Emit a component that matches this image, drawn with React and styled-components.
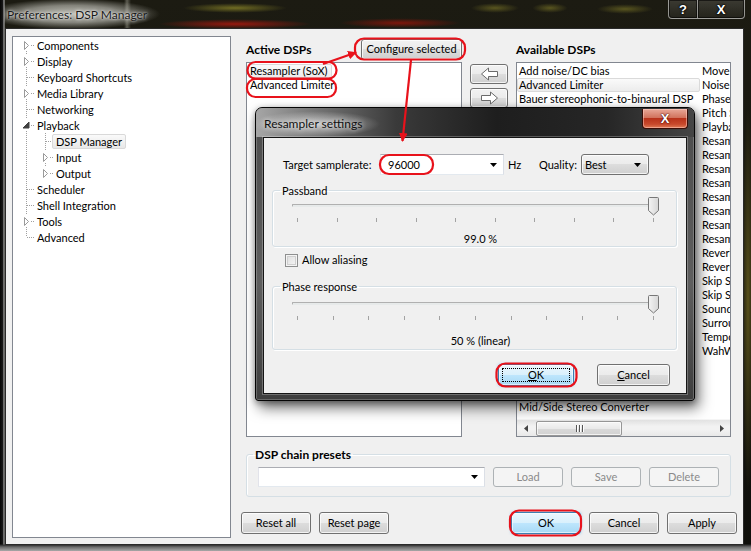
import React from "react";
import styled, { createGlobalStyle, css } from "styled-components";

const UI_FONT = `Lato, "Liberation Sans", Arial, sans-serif`;

const GlobalStyle = createGlobalStyle`
  *, *::before, *::after { box-sizing: border-box; }
  html, body { margin: 0; padding: 0; width: 751px; height: 551px; overflow: hidden; background: #151510; }
  #root { width: 751px; height: 551px; }
`;

/* ---------- outer window ---------- */
const Window = styled.div`
  position: relative;
  width: 751px;
  height: 551px;
  display: flex;
  flex-direction: column;
  font-family: ${UI_FONT};
  font-size: 11px;
  color: #000;
  overflow: hidden;
  background:
    linear-gradient(to bottom, transparent 544px, #2e2e2e 545px, #6a6a6a 547px, #a8a8a8 551px),
    linear-gradient(to right, #050505 0px, #1a1a1a 3px, #bdbdbd 4px, transparent 5px),
    radial-gradient(ellipse 110px 19px at 72px 14px, rgba(200,200,192,0.95), rgba(200,200,192,0.6) 45%, rgba(200,200,192,0) 80%),
    linear-gradient(to right, transparent 124px, rgba(215,215,200,0.35) 127px, transparent 131px),
    radial-gradient(ellipse 95px 6px at 235px 24px, rgba(165,25,15,0.9), transparent 80%),
    radial-gradient(ellipse 75px 6px at 400px 23px, rgba(150,20,10,0.8), transparent 80%),
    radial-gradient(ellipse 65px 6px at 235px 8px, rgba(140,135,40,0.75), transparent 80%),
    radial-gradient(ellipse 30px 6px at 495px 8px, rgba(130,125,40,0.6), transparent 80%),
    radial-gradient(ellipse 22px 6px at 550px 8px, rgba(130,125,40,0.6), transparent 80%),
    radial-gradient(ellipse 35px 6px at 625px 9px, rgba(130,125,40,0.6), transparent 80%),
    radial-gradient(ellipse 8px 240px at 748px 300px, rgba(110,100,30,0.75), transparent 80%),
    linear-gradient(to bottom, #1c1b12, #0f0f0b);
`;

const TitleBar = styled.div`
  height: 28px;
  flex: none;
  display: flex;
  align-items: flex-start;
  justify-content: space-between;
`;

const TitleText = styled.div`
  padding: 7px 0 0 7px;
  font-size: 12px;
  line-height: 15px;
  color: #1a1a1a;
  text-shadow: 0 0 4px rgba(255, 255, 255, 0.9), 0 0 2px rgba(255, 255, 255, 0.7);
`;

const CaptionButtons = styled.div`
  display: flex;
  margin-right: 6px;
`;

const CaptionButton = styled.div`
  width: ${(p) => p.$w}px;
  height: 19px;
  display: flex;
  align-items: center;
  justify-content: center;
  border: 1px solid rgba(255, 255, 255, 0.5);
  border-top: none;
  background: linear-gradient(rgba(255, 255, 255, 0.14), rgba(255, 255, 255, 0.04));
  box-shadow: inset 0 0 0 1px rgba(0, 0, 0, 0.55);
  color: #fff;
  font: bold 13px "Liberation Sans", Arial, sans-serif;
  text-shadow: 0 0 2px #000, 0 0 2px #000, 0 0 1px #000;
  &:first-child { border-radius: 0 0 0 4px; }
  &:last-child { border-radius: 0 0 4px 0; border-left: none; }
`;

const Client = styled.div`
  margin: 0 7px 0 5px;
  height: 517px;
  flex: none;
  background: #f0f0f0;
  border: 1px solid #2a2a2a;
  display: flex;
  gap: 10px;
  padding: 7px 0 0 6px;
`;

/* ---------- tree ---------- */
const Tree = styled.div`
  width: 219px;
  height: 502px;
  background: #fff;
  border: 1px solid #828790;
  padding-top: 0;
`;

const TreeRow = styled.div`
  height: 16px;
  display: flex;
  align-items: center;
  padding-left: 6px;
`;

const TreeLabel = styled.span`
  margin-left: -4px;
  padding: 0 3px;
  height: 15px;
  line-height: 13px;
  white-space: nowrap;
  border: 1px solid transparent;
  border-radius: 2px;
  ${(p) =>
    p.$selected &&
    css`
      background: linear-gradient(#fafafa, #e8e8e8);
      border-color: #d9d9d9;
    `}
`;

const Dots = { stroke: "#a0a0a0", strokeDasharray: "1 1" };

function Rail() {
  return (
    <svg width="19" height="16" style={{ flex: "none" }}>
      <line x1="7.5" y1="0" x2="7.5" y2="16" {...Dots} />
    </svg>
  );
}

function Connector({ first, last, exp }) {
  return (
    <svg width="18" height="16" style={{ flex: "none" }}>
      <line x1="7.5" y1={first ? 8 : 0} x2="7.5" y2={last ? 8 : 16} {...Dots} />
      <line x1="8" y1="8.5" x2="16" y2="8.5" {...Dots} />
      {exp && <rect x="3" y="2" width="8" height="12" fill="#fff" />}
      {exp === "closed" && (
        <path d="M5.5 4.5 L9.5 8.5 L5.5 12.5 Z" fill="#fff" stroke="#9a9a9a" />
      )}
      {exp === "open" && <path d="M10 5 L10 11 L4 11 Z" fill="#404040" stroke="#404040" strokeLinejoin="round" />}
    </svg>
  );
}

const treeItems = [
  { label: "Components", level: 0, exp: "closed", first: true },
  { label: "Display", level: 0, exp: "closed" },
  { label: "Keyboard Shortcuts", level: 0 },
  { label: "Media Library", level: 0, exp: "closed" },
  { label: "Networking", level: 0 },
  { label: "Playback", level: 0, exp: "open" },
  { label: "DSP Manager", level: 1, selected: true },
  { label: "Input", level: 1, exp: "closed" },
  { label: "Output", level: 1, exp: "closed", last: true },
  { label: "Scheduler", level: 0 },
  { label: "Shell Integration", level: 0 },
  { label: "Tools", level: 0, exp: "closed" },
  { label: "Advanced", level: 0, last: true },
];

/* ---------- right pane ---------- */
const RightPane = styled.div`
  width: 496px;
  display: flex;
  flex-direction: column;
`;

const DspGrid = styled.div`
  display: grid;
  grid-template-columns: 216px 38px 215px;
  grid-template-rows: 26px 375px;
  column-gap: 8px;
  padding: 0 6px 0 5px;
`;

const ColumnHead = styled.div`
  display: flex;
  align-items: center;
  justify-content: space-between;
`;

const HeadLabel = styled.span`
  font-weight: bold;
  font-size: 12px;
  line-height: 15px;
`;

const buttonBase = css`
  font-family: ${UI_FONT};
  font-size: 11px;
  color: #000;
  border: 1px solid #707070;
  border-radius: 3px;
  background: linear-gradient(#f2f2f2 0%, #ebebeb 49%, #dddddd 50%, #cfcfcf 100%);
  box-shadow: inset 0 0 0 1px rgba(255, 255, 255, 0.75);
  display: flex;
  align-items: center;
  justify-content: center;
  padding: 0;
  line-height: 14px;
  white-space: nowrap;
`;

const Button = styled.button`
  ${buttonBase}
  width: ${(p) => p.$w || 70}px;
  height: ${(p) => p.$h || 22}px;
  ${(p) =>
    p.$default &&
    css`
      border-color: #3c7fb1;
      background: linear-gradient(#eaf6fd 0%, #d9f0fc 49%, #bee6fd 50%, #a7d9f5 100%);
      box-shadow: inset 0 0 0 1px rgba(255, 255, 255, 0.6), 0 0 3px rgba(80, 170, 240, 0.6);
    `}
  ${(p) =>
    p.$disabled &&
    css`
      color: #8a8a8a;
      border-color: #adb2b5;
      background: #f4f4f4;
      box-shadow: none;
    `}
`;

const FocusRect = styled.span`
  display: flex;
  align-items: center;
  justify-content: center;
  width: calc(100% - 6px);
  height: calc(100% - 6px);
  border: 1px dotted #000;
`;

const Underline = styled.span`
  text-decoration: underline;
`;

const ListBox = styled.div`
  background: #fff;
  border: 1px solid #828790;
  display: flex;
  flex-direction: column;
  overflow: hidden;
`;

const ListRows = styled.div`
  flex: 1;
  padding: 1px 0 0 ${(p) => (p.$columns ? 0 : 1)}px;
  overflow: hidden;
  ${(p) =>
    p.$columns &&
    css`
      display: grid;
      grid-auto-flow: column;
      grid-template-rows: repeat(25, 14px);
      grid-auto-columns: 183px;
      align-content: start;
    `}
`;

const ListItem = styled.div`
  height: 14px;
  line-height: 12px;
  padding: 0 ${(p) => (p.$fit ? 3 : 1)}px 0 1px;
  white-space: nowrap;
  overflow: hidden;
  border: 1px solid transparent;
  border-radius: 2px;
  width: ${(p) => (p.$fit ? "max-content" : "auto")};
  ${(p) =>
    p.$selected &&
    css`
      background: linear-gradient(#fafafa, #ececec);
      border-color: #dadada;
    `}
`;

const ArrowColumn = styled.div`
  display: flex;
  flex-direction: column;
  gap: 4px;
  padding-top: 2px;
`;

const HScroll = styled.div`
  height: 17px;
  flex: none;
  display: flex;
  align-items: center;
  background: linear-gradient(#e3e3e3, #f2f2f2 40%, #f2f2f2 60%, #e8e8e8);
  border-top: 1px solid #f5f5f5;
`;

const ScrollArrow = styled.div`
  width: 17px;
  height: 17px;
  display: flex;
  align-items: center;
  justify-content: center;
`;

const ScrollTrack = styled.div`
  flex: 1;
  height: 17px;
  display: flex;
  align-items: center;
  padding-left: 2px;
`;

const ScrollThumb = styled.div`
  width: 86px;
  height: 15px;
  border: 1px solid #979797;
  border-radius: 2px;
  background: linear-gradient(#f6f6f6, #e9e9e9 50%, #d9d9d9 51%, #d2d2d2);
  box-shadow: inset 0 0 0 1px rgba(255, 255, 255, 0.7);
  display: flex;
  align-items: center;
  justify-content: center;
  gap: 2px;
`;

const Grip = styled.span`
  width: 1px;
  height: 7px;
  background: #555;
  box-shadow: 1px 0 0 #fff;
`;

const GroupBox = styled.fieldset`
  margin: 10px 6px 0 5px;
  padding: 5px 11px 9px 11px;
  border: 1px solid #d5dfe5;
  border-radius: 3px;
  box-shadow: inset 1px 1px 0 #fff;
  min-inline-size: 0;
`;

const GroupLegend = styled.legend`
  margin-left: ${(p) => p.$ml}px;
  padding: 0 2px;
  font-weight: ${(p) => (p.$bold ? "bold" : "normal")};
  font-size: ${(p) => (p.$bold ? 12 : 11)}px;
  line-height: 15px;
`;

const PresetRow = styled.div`
  display: flex;
  gap: 8px;
  height: 20px;
`;

const ComboEdit = styled.div`
  width: ${(p) => p.$w}px;
  height: ${(p) => p.$h || 20}px;
  background: #fff;
  border: 1px solid #abadb3;
  border-right-color: #dbdfe6;
  border-bottom-color: #e3e9ef;
  border-left-color: #e2e3ea;
  display: flex;
  align-items: center;
  justify-content: space-between;
  padding: 0 5px 0 7px;
  line-height: 14px;
`;

const ComboButton = styled.div`
  ${buttonBase}
  width: ${(p) => p.$w}px;
  height: 21px;
  justify-content: space-between;
  padding: 0 6px 0 3px;
`;

const BottomRow = styled.div`
  margin-top: 15px;
  display: flex;
  justify-content: space-between;
`;

const ButtonGroup = styled.div`
  display: flex;
  gap: 8px;
`;

function DropArrow() {
  return (
    <svg width="8" height="4" style={{ flex: "none" }}>
      <path d="M0 0 H7 L3.5 4 Z" fill="#000" />
    </svg>
  );
}

function MoveArrow({ dir }) {
  const d =
    dir === "left"
      ? "M1.5 7 L8.5 1 L8.5 4.5 L17.5 4.5 L17.5 9.5 L8.5 9.5 L8.5 13 Z"
      : "M17.5 7 L10.5 1 L10.5 4.5 L1.5 4.5 L1.5 9.5 L10.5 9.5 L10.5 13 Z";
  return (
    <svg width="19" height="14">
      <path d={d} fill="#fff" stroke="#6a6a6a" strokeLinejoin="round" />
    </svg>
  );
}

const col1 = [
  "Add noise/DC bias",
  "Advanced Limiter",
  "Bauer stereophonic-to-binaural DSP",
  "Channel mixer",
  "Convert 5.1 to stereo",
  "Convolver",
  "Crossfader",
  "Downmix channels to mono",
  "Downmix channels to stereo",
  "Dynamic Range Compressor",
  "Echo",
  "Equalizer",
  "Hard -6dB limiter",
  "Headphone",
  "Limiter",
  "Bass Boost",
  "Matrix Mixer",
  "Center Cut",
  "Ambience",
  "Channel Delay",
  "Chorus",
  "Dolby Headphone",
  "Graphic Equalizer",
  "Channel Swap",
  "Mid/Side Stereo Converter",
];

const col2 = [
  "Move stereo to center channel",
  "Noise sharpening",
  "Phase Inverter",
  "Pitch Shift",
  "Playback Rate Shift",
  "Resampler (dBpoweramp/SSRC)",
  "Resampler (libsamplerate)",
  "Resampler (PPHS)",
  "Resampler (SoX)",
  "Resampler (SRC)",
  "Resampler (Secret Rabbit Code)",
  "Resampler (MediaFoundation)",
  "Resampler (speex)",
  "Reverb",
  "Reverse stereo channels",
  "Skip Silence",
  "Skip Silence (live)",
  "Sound Touch",
  "Surround",
  "Tempo Shift",
  "WahWah",
];

/* ---------- dialog ---------- */
const Dialog = styled.div`
  position: absolute;
  left: 255px;
  top: 107px;
  width: 440px;
  height: 294px;
  display: flex;
  flex-direction: column;
  padding: 0 7px 6px 7px;
  border: 1px solid #050505;
  border-radius: 7px 7px 3px 3px;
  background: linear-gradient(to bottom, #4c4c4c, #5e5e5e 60%, #3e3e3e);
  box-shadow: inset 0 0 0 1px rgba(255, 255, 255, 0.22), 4px 7px 14px rgba(0, 0, 0, 0.55),
    0 2px 6px rgba(0, 0, 0, 0.35);
  z-index: 2;
`;

const DialogTitle = styled.div`
  height: 29px;
  flex: none;
  margin: 0 -7px;
  padding: 0 6px 0 7px;
  display: flex;
  justify-content: space-between;
  align-items: flex-start;
  border-radius: 6px 6px 0 0;
  background:
    radial-gradient(ellipse 80px 16px at 60px 16px, rgba(230, 230, 230, 0.75), rgba(230, 230, 230, 0) 80%),
    linear-gradient(to right, #a6a6a6 0%, #7a7a7a 12%, #3a3a3a 32%, #1e1e1e 55%, #262626 80%, #454545 100%);
`;

const DialogCaption = styled.span`
  padding: 8px 0 0 1px;
  font-size: 12px;
  line-height: 15px;
  color: #111;
  text-shadow: 0 0 5px rgba(255, 255, 255, 0.9);
`;

const CloseButton = styled.div`
  width: 46px;
  height: 20px;
  margin-top: 1px;
  display: flex;
  align-items: center;
  justify-content: center;
  border: 1px solid #3a0d06;
  border-top: none;
  border-radius: 0 0 4px 4px;
  background: linear-gradient(#e8a898 0%, #d2735d 45%, #b8321a 50%, #c8492c 80%, #e07a55 100%);
  box-shadow: inset 0 0 0 1px rgba(255, 210, 200, 0.5);
  color: #fff;
  font: bold 13px "Liberation Sans", Arial, sans-serif;
  text-shadow: 0 0 2px #400, 0 0 1px #400;
`;

const DialogClient = styled.div`
  flex: 1;
  background: #f0f0f0;
  border: 1px solid #151515;
  box-shadow: 0 0 0 1px rgba(255, 255, 255, 0.25);
  display: flex;
  flex-direction: column;
`;

const SettingsRow = styled.div`
  margin-top: 16px;
  height: 21px;
  display: flex;
  align-items: center;
  padding-left: 19px;
`;

const FieldLabel = styled.span`
  width: ${(p) => p.$w}px;
  margin-left: ${(p) => p.$ml || 0}px;
  flex: none;
  line-height: 15px;
  white-space: nowrap;
`;

const DialogGroup = styled.fieldset`
  margin: ${(p) => p.$mt}px 9px 0 8px;
  padding: 0 0 ${(p) => p.$pb}px 0;
  border: 1px solid #d5dfe5;
  border-radius: 3px;
  box-shadow: inset 1px 1px 0 #fff, 1px 1px 0 #fff;
  min-inline-size: 0;
`;

const SliderTrack = styled.div`
  position: relative;
  height: 19px;
  margin: ${(p) => p.$mt}px 21px 0 19px;
  &::before {
    content: "";
    position: absolute;
    left: 0;
    right: 0;
    top: 7px;
    height: 3px;
    border: 1px solid #b0b0b0;
    border-bottom-color: #e7eaea;
    border-right-color: #e7eaea;
    background: #e7eaea;
    border-radius: 1px;
  }
`;

const SliderThumb = styled.svg`
  position: absolute;
  top: 0;
`;

const TickRow = styled.div`
  margin: 2px 22px 0 24px;
  height: 4px;
  display: flex;
  justify-content: space-between;
`;

const Tick = styled.span`
  width: 1px;
  height: 4px;
  background: #a3a3a3;
`;

const SliderValue = styled.div`
  margin-top: ${(p) => p.$mt}px;
  line-height: 14px;
  text-align: center;
  padding-left: 12px;
`;

const CheckRow = styled.label`
  margin-top: 6px;
  height: 14px;
  display: flex;
  align-items: center;
  gap: 4px;
  padding-left: 21px;
  line-height: 14px;
`;

const CheckBox = styled.span`
  width: 13px;
  height: 13px;
  border: 1px solid #8e8f8f;
  background: linear-gradient(135deg, #dcdcdc, #f7f7f7);
  box-shadow: inset 0 0 0 1px #f4f4f4, inset 0 0 0 2px #cfcfcf;
`;

const DialogButtons = styled.div`
  margin-top: 14px;
  display: flex;
  justify-content: flex-end;
  gap: 23px;
  padding-right: 16px;
`;

function Slider({ ticks, thumbLeft, mt }) {
  return (
    <>
      <SliderTrack $mt={mt}>
        <SliderThumb width="11" height="19" style={{ left: thumbLeft }}>
          <defs>
            <linearGradient id="thumbg" x1="0" y1="0" x2="1" y2="0">
              <stop offset="0" stopColor="#f4f4f4" />
              <stop offset="1" stopColor="#d6d6d6" />
            </linearGradient>
          </defs>
          <path d="M1.5 0.5 H9.5 Q10.5 0.5 10.5 1.5 V13.5 L5.5 18 L0.5 13.5 V1.5 Q0.5 0.5 1.5 0.5 Z" fill="url(#thumbg)" stroke="#777" />
        </SliderThumb>
      </SliderTrack>
      <TickRow>
        {Array.from({ length: ticks }).map((_, i) => (
          <Tick key={i} />
        ))}
      </TickRow>
    </>
  );
}

/* ---------- annotation overlay ---------- */
const Annotations = styled.svg`
  position: absolute;
  left: 0;
  top: 0;
  pointer-events: none;
  z-index: 3;
`;

const RED = "#e8121b";

export default function App() {
  return (
    <>
      <GlobalStyle />
      <Window>
        <TitleBar>
          <TitleText>Preferences: DSP Manager</TitleText>
          <CaptionButtons>
            <CaptionButton $w={30}>?</CaptionButton>
            <CaptionButton $w={47}>X</CaptionButton>
          </CaptionButtons>
        </TitleBar>

        <Client>
          <Tree>
            {treeItems.map((it) => (
              <TreeRow key={it.label}>
                {it.level === 1 && <Rail />}
                <Connector first={it.first} last={it.last} exp={it.exp} />
                <TreeLabel $selected={it.selected}>{it.label}</TreeLabel>
              </TreeRow>
            ))}
          </Tree>

          <RightPane>
            <DspGrid>
              <ColumnHead>
                <HeadLabel>Active DSPs</HeadLabel>
                <Button $w={101} $h={21}>Configure selected</Button>
              </ColumnHead>
              <div />
              <ColumnHead>
                <HeadLabel>Available DSPs</HeadLabel>
              </ColumnHead>

              <ListBox>
                <ListRows>
                  <ListItem $fit $selected>Resampler (SoX)</ListItem>
                  <ListItem $fit>Advanced Limiter</ListItem>
                </ListRows>
              </ListBox>

              <ArrowColumn>
                <Button $w={38} $h={20}>
                  <MoveArrow dir="left" />
                </Button>
                <Button $w={38} $h={20}>
                  <MoveArrow dir="right" />
                </Button>
              </ArrowColumn>

              <ListBox>
                <ListRows $columns>
                  {col1.map((n, i) => (
                    <ListItem key={"a" + i} $selected={i === 1}>
                      {n}
                    </ListItem>
                  ))}
                  {col2.map((n, i) => (
                    <ListItem key={"b" + i}>{n}</ListItem>
                  ))}
                </ListRows>
                <HScroll>
                  <ScrollArrow>
                    <svg width="4" height="7">
                      <path d="M4 0 V7 L0 3.5 Z" fill="#444" />
                    </svg>
                  </ScrollArrow>
                  <ScrollTrack>
                    <ScrollThumb>
                      <Grip />
                      <Grip />
                      <Grip />
                    </ScrollThumb>
                  </ScrollTrack>
                  <ScrollArrow>
                    <svg width="4" height="7">
                      <path d="M0 0 V7 L4 3.5 Z" fill="#444" />
                    </svg>
                  </ScrollArrow>
                </HScroll>
              </ListBox>
            </DspGrid>

            <GroupBox>
              <GroupLegend $bold $ml={-5}>DSP chain presets</GroupLegend>
              <PresetRow>
                <ComboEdit $w={227}>
                  <span />
                  <DropArrow />
                </ComboEdit>
                <Button $w={70} $h={20} $disabled>Load</Button>
                <Button $w={70} $h={20} $disabled>Save</Button>
                <Button $w={70} $h={20} $disabled>Delete</Button>
              </PresetRow>
            </GroupBox>

            <BottomRow>
              <ButtonGroup>
                <Button>Reset all</Button>
                <Button>Reset page</Button>
              </ButtonGroup>
              <ButtonGroup>
                <Button $default>OK</Button>
                <Button>Cancel</Button>
                <Button>Apply</Button>
              </ButtonGroup>
            </BottomRow>
          </RightPane>
        </Client>

        <Dialog>
          <DialogTitle>
            <DialogCaption>Resampler settings</DialogCaption>
            <CloseButton>X</CloseButton>
          </DialogTitle>
          <DialogClient>
            <SettingsRow>
              <FieldLabel $w={97}>Target samplerate:</FieldLabel>
              <ComboEdit $w={124} $h={21}>
                <span>96000</span>
                <DropArrow />
              </ComboEdit>
              <FieldLabel $w={31} $ml={4}>Hz</FieldLabel>
              <FieldLabel $w={42}>Quality:</FieldLabel>
              <ComboButton $w={68}>
                <span>Best</span>
                <DropArrow />
              </ComboButton>
            </SettingsRow>

            <DialogGroup $mt={8} $pb={0}>
              <GroupLegend $ml={7}>Passband</GroupLegend>
              <Slider ticks={10} thumbLeft={356} mt={-1} />
              <SliderValue $mt={10}>99.0 %</SliderValue>
            </DialogGroup>

            <CheckRow>
              <CheckBox />
              Allow aliasing
            </CheckRow>

            <DialogGroup $mt={12} $pb={1}>
              <GroupLegend $ml={7}>Phase response</GroupLegend>
              <Slider ticks={11} thumbLeft={356} mt={1} />
              <SliderValue $mt={14}>50 % (linear)</SliderValue>
            </DialogGroup>

            <DialogButtons>
              <Button $w={76} $h={22} $default>
                <FocusRect>
                  <Underline>O</Underline>K
                </FocusRect>
              </Button>
              <Button $w={73} $h={22}>
                <span>
                  <Underline>C</Underline>ancel
                </span>
              </Button>
            </DialogButtons>
          </DialogClient>
        </Dialog>

        <Annotations width="751" height="551" viewBox="0 0 751 551">
          <defs>
            <marker id="head" viewBox="0 0 10 10" refX="9" refY="5" markerWidth="4" markerHeight="4" orient="auto">
              <path d="M0 0 L10 5 L0 10 Z" fill={RED} />
            </marker>
          </defs>
          <g fill="none" stroke={RED} strokeWidth="2.2">
            <rect x="355" y="38.5" width="110" height="21" rx="9" />
            <rect x="247.5" y="62" width="89" height="16.5" rx="8" />
            <rect x="247" y="79" width="89" height="18" rx="8.5" />
            <rect x="380" y="155" width="53" height="19" rx="9" />
            <rect x="496.5" y="363.5" width="80" height="23" rx="9" />
            <rect x="510" y="510.5" width="71" height="25" rx="9" />
            <line x1="323" y1="64" x2="356" y2="52.5" markerEnd="url(#head)" />
            <line x1="411" y1="60" x2="402.5" y2="141" markerEnd="url(#head)" />
          </g>
        </Annotations>
      </Window>
    </>
  );
}
